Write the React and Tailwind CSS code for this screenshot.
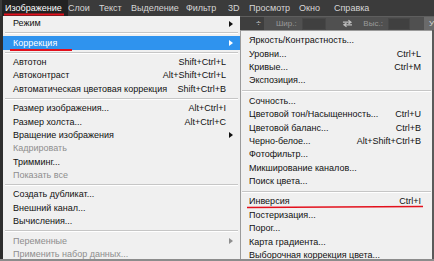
import React from "react";

const Arrow = ({ color = "#000" }) => (
  <svg width="4" height="6" viewBox="0 0 4 6" className="shrink-0">
    <path d="M0 0 L4 3 L0 6 Z" fill={color} />
  </svg>
);

const mainItems = [
  { t: "Режим", arrow: true },
  { sep: true },
  { t: "Коррекция", arrow: true, hl: true },
  { sep: true },
  { t: "Автотон", k: "Shift+Ctrl+L" },
  { t: "Автоконтраст", k: "Alt+Shift+Ctrl+L" },
  { t: "Автоматическая цветовая коррекция", k: "Shift+Ctrl+B" },
  { sep: true },
  { t: "Размер изображения...", k: "Alt+Ctrl+I" },
  { t: "Размер холста...", k: "Alt+Ctrl+C" },
  { t: "Вращение изображения", arrow: true },
  { t: "Кадрировать", dis: true },
  { t: "Тримминг..." },
  { t: "Показать все", dis: true },
  { sep: true },
  { t: "Создать дубликат..." },
  { t: "Внешний канал..." },
  { t: "Вычисления..." },
  { sep: true },
  { t: "Переменные", arrow: true, dis: true },
  { t: "Применить набор данных...", dis: true },
];

const subItems = [
  { t: "Яркость/Контрастность..." },
  { t: "Уровни...", k: "Ctrl+L" },
  { t: "Кривые...", k: "Ctrl+M" },
  { t: "Экспозиция..." },
  { sep: true },
  { t: "Сочность..." },
  { t: "Цветовой тон/Насыщенность...", k: "Ctrl+U" },
  { t: "Цветовой баланс...", k: "Ctrl+B" },
  { t: "Черно-белое...", k: "Alt+Shift+Ctrl+B" },
  { t: "Фотофильтр..." },
  { t: "Микширование каналов..." },
  { t: "Поиск цвета..." },
  { sep: true },
  { t: "Инверсия", k: "Ctrl+I" },
  { t: "Постеризация..." },
  { t: "Порог..." },
  { t: "Карта градиента..." },
  { t: "Выборочная коррекция цвета..." },
];

function MainRow({ it }) {
  if (it.sep)
    return (
      <div className="h-[6px] flex flex-col justify-center pl-[2px] pr-[2px]">
        <div className="h-[1px] bg-[#c6c6c6]" />
        <div className="h-[1px] bg-[#ffffff]" />
      </div>
    );
  const color = it.hl ? "text-white" : it.dis ? "text-[#8e8e8e]" : "text-[#111]";
  return (
    <div
      className={`h-[13.4px] flex items-center pl-[10px] pr-[7px] ${color} ${
        it.hl ? "bg-[#2f93ee]" : ""
      }`}
    >
      <span className="flex-1 whitespace-nowrap">{it.t}</span>
      {it.k && <span className="whitespace-nowrap mr-[7px]">{it.k}</span>}
      {it.arrow && <Arrow color={it.hl ? "#fff" : it.dis ? "#8e8e8e" : "#111"} />}
    </div>
  );
}

function SubRow({ it }) {
  if (it.sep)
    return (
      <div className="h-[7px] flex flex-col justify-center pl-[1px] pr-[1px]">
        <div className="h-[1px] bg-[#c6c6c6]" />
        <div className="h-[1px] bg-[#ffffff]" />
      </div>
    );
  return (
    <div className="h-[13.4px] flex items-center pl-[8px] pr-[11px] text-[#111]">
      <span className="flex-1 whitespace-nowrap">{it.t}</span>
      {it.k && <span className="whitespace-nowrap">{it.k}</span>}
    </div>
  );
}

const bar = [
  { t: "Изображение", w: "w-[66px]", active: true },
  { t: "Слои", w: "w-[31px]" },
  { t: "Текст", w: "w-[32px]" },
  { t: "Выделение", w: "w-[55px]" },
  { t: "Фильтр", w: "w-[42px]" },
  { t: "3D", w: "w-[21px]" },
  { t: "Просмотр", w: "w-[50px]" },
  { t: "Окно", w: "w-[35px]" },
  { t: "Справка", w: "w-[60px]" },
];

export default function App() {
  return (
    <div
      className="relative w-[434px] h-[261px] overflow-hidden bg-[#3b3b3b] text-[9px] leading-none"
      style={{ fontFamily: '"Liberation Sans", Arial, sans-serif' }}
    >
      {/* menu bar */}
      <div className="h-[16px] flex items-stretch text-[9px] text-[#d6d6d6] pl-[2px]">
        {bar.map((b) => (
          <div
            key={b.t}
            className={`${b.w} shrink-0 flex items-center ${
              b.active ? "bg-[#222] text-white pl-[3px]" : ""
            }`}
          >
            {b.t}
          </div>
        ))}
      </div>

      <div className="flex h-[245px]">
        <div className="w-[3px] bg-[#2e2e2e]" />
        {/* main menu */}
        <div className="w-[237px] bg-[#f0f0f0] pt-[1px]">
          {mainItems.map((it, i) => (
            <MainRow key={i} it={it} />
          ))}
        </div>
        {/* right column */}
        <div className="w-[194px] flex flex-col">
          {/* options bar */}
          <div className="h-[17px] bg-[#505050] border-t border-[#5e5e5e] flex items-center text-[8px] text-[#9a9a9a]">
            <div className="w-[26px] h-[13px] bg-[#3e3e3e] flex items-center justify-end pr-[3px] text-[#cfcfcf]">
              <span className="text-[9px]">÷</span>
            </div>
            <span className="ml-[12px]">Шир.:</span>
            <div className="ml-[5px] w-[27px] h-[12px] bg-[#404040] border border-[#474747]" />
            <svg width="12" height="9" viewBox="0 0 12 9" className="ml-[16px]">
              <path d="M1 3 H10 M7 1 L10 3 L7 5" stroke="#bdbdbd" strokeWidth="1.2" fill="none" />
              <path d="M11 6 H2 M5 4 L2 6 L5 8" stroke="#bdbdbd" strokeWidth="1.2" fill="none" />
            </svg>
            <span className="ml-[10px]">Выс.:</span>
            <div className="ml-[5px] w-[24px] h-[12px] bg-[#404040] border border-[#474747]" />
            <div className="ml-[14px] flex-1 h-[13px] bg-[#6a6a6a] text-[#dcdcdc] flex items-center pl-[5px]">
              У
            </div>
          </div>
          {/* submenu */}
          <div className="flex-1 flex">
            <div className="w-[192px] bg-[#f0f0f0] border-l border-t border-[#9a9a9a] pt-[3px]">
              {subItems.map((it, i) => (
                <SubRow key={i} it={it} />
              ))}
            </div>
            <div className="flex-1 bg-[#5a5a5a]" />
          </div>
        </div>
      </div>

      {/* bottom edge */}
      <div className="absolute left-0 right-0 bottom-0 h-[2px] bg-[#8c8c8c]" />

      {/* red annotation lines */}
      <svg className="absolute left-0 top-0 pointer-events-none" width="434" height="261">
        <path d="M4 14.5 L64 14.5" stroke="#e3101c" strokeWidth="2" />
        <path d="M10 50 L72 50" stroke="#e3101c" strokeWidth="2" />
        <path d="M247 207.5 L423 206.5" stroke="#e3101c" strokeWidth="1.6" />
      </svg>
    </div>
  );
}
